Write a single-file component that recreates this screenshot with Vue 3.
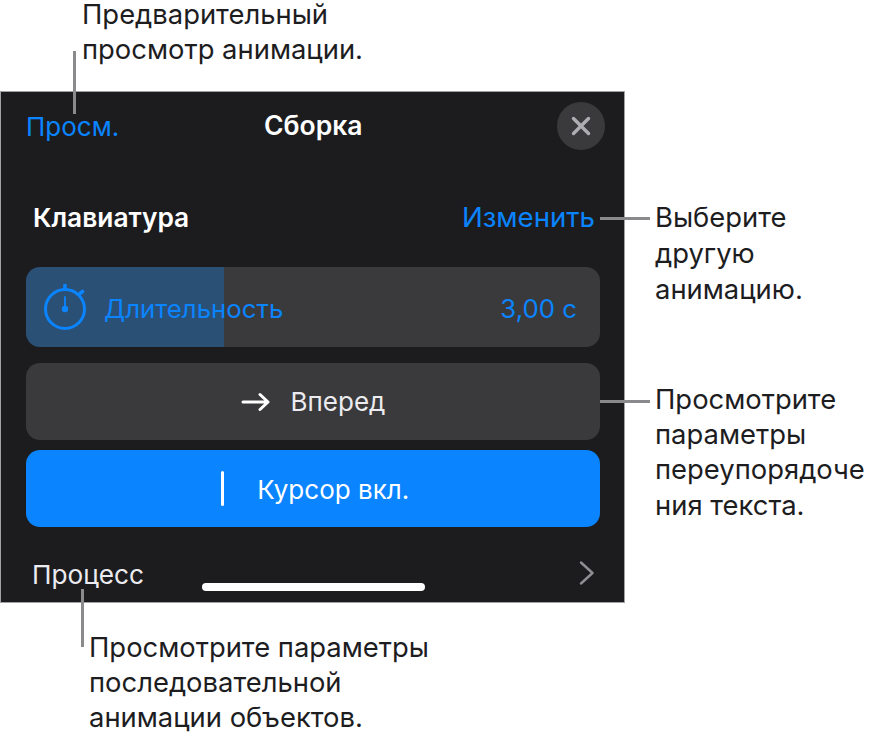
<script setup>
const callouts = [
  { cls: 'c-top', lines: ['Предварительный', 'просмотр анимации.'] },
  { cls: 'c-change', lines: ['Выберите', 'другую', 'анимацию.'] },
  { cls: 'c-order', lines: ['Просмотрите', 'параметры', 'переупорядоче', 'ния текста.'] },
  { cls: 'c-seq', lines: ['Просмотрите параметры', 'последовательной', 'анимации объектов.'] },
]
</script>

<template>
  <div class="page">
    <section class="panel">
      <header class="nav">
        <span class="blue">Просм.</span>
        <span class="title">Сборка</span>
        <span class="close">
          <svg width="22" height="22" viewBox="0 0 22 22"><path d="M3.5 3.5 18.5 18.5M18.5 3.5 3.5 18.5" fill="none" stroke="#aeaeb2" stroke-width="3.4" stroke-linecap="round"/></svg>
        </span>
      </header>
      <div class="effect">
        <span class="effect-name">Клавиатура</span>
        <span class="blue change">Изменить</span>
      </div>
      <div class="rows">
        <div class="row duration">
          <div class="fill"></div>
          <svg class="watch" width="44" height="46" viewBox="0 0 44 46">
            <circle cx="22" cy="25" r="19.5" fill="none" stroke="#0a84ff" stroke-width="3"/>
            <path d="M22 1.5V5.5" stroke="#0a84ff" stroke-width="3.6" stroke-linecap="round"/>
            <path d="M37 9.5 39.5 7.5" stroke="#0a84ff" stroke-width="3.6" stroke-linecap="round"/>
            <path d="M22 25V13" stroke="#0a84ff" stroke-width="1.8" stroke-linecap="round"/>
            <circle cx="22" cy="25" r="3.2" fill="#0a84ff"/>
          </svg>
          <span class="dur-label">Длительность</span>
          <span class="dur-value">3,00 с</span>
        </div>
        <div class="row dir">
          <svg width="30" height="20" viewBox="0 0 30 20"><path d="M2 10H27M19 2.5 27 10 19 17.5" fill="none" stroke="#fff" stroke-width="3" stroke-linecap="round" stroke-linejoin="round"/></svg>
          <span class="label">Вперед</span>
        </div>
        <div class="row cursor">
          <span class="caret"></span>
          <span class="label white">Курсор вкл.</span>
        </div>
      </div>
      <footer class="process">
        <span>Процесс</span>
        <svg width="16" height="24" viewBox="0 0 16 24"><path d="M2 1.5 13.5 12 2 22.5" fill="none" stroke="#8e8e93" stroke-width="2.4" stroke-linecap="round" stroke-linejoin="round"/></svg>
        <span class="home"></span>
      </footer>
    </section>

    <span class="line l-top"></span>
    <span class="line l-change"></span>
    <span class="line l-order"></span>
    <span class="line l-seq"></span>
    <div v-for="c in callouts" :key="c.cls" class="callout" :class="c.cls">
      <div v-for="l in c.lines" :key="l">{{ l }}</div>
    </div>
  </div>
</template>

<style scoped>
.page {
  position: relative;
  width: 878px;
  height: 742px;
  padding-top: 91px;
  box-sizing: border-box;
  background: #fff;
  font-family: Inter, "Liberation Sans", sans-serif;
  overflow: hidden;
}
.panel {
  position: relative;
  width: 625px;
  height: 512px;
  box-sizing: border-box;
  background: #1c1c1e;
  border: 1px solid #a2a2a4;
  color: #fff;
  display: flex;
  flex-direction: column;
  padding: 0 24px 0 25px;
}
.blue { color: #0a84ff; font-size: 26px; }
.change { font-size: 27.6px; }
.nav {
  height: 68px;
  display: flex;
  align-items: center;
  justify-content: space-between;
  position: relative;
}
.title {
  position: absolute;
  left: 238px;
  top: 17px;
  font-size: 26.5px;
  font-weight: 600;
}
.close {
  width: 48px;
  height: 48px;
  border-radius: 50%;
  background: #3a3a3c;
  display: flex;
  align-items: center;
  justify-content: center;
  margin-right: -5px;
}
.effect {
  height: 107px;
  display: flex;
  align-items: center;
  justify-content: space-between;
  padding: 7px 5px 0 7px;
  box-sizing: border-box;
}
.effect-name { font-size: 26.3px; font-weight: 600; }
.rows { display: flex; flex-direction: column; }
.row {
  position: relative;
  border-radius: 14px;
  background: #3a3a3c;
  display: flex;
  align-items: center;
  overflow: hidden;
}
.duration { height: 80px; margin-bottom: 16px; padding: 0 23px 0 17px; }
.fill { position: absolute; left: 0; top: 0; bottom: 0; width: 198px; background: #0a84ff; opacity: .3; }
.watch { position: relative; margin-right: 17px; }
.dur-label, .dur-value { position: relative; top: 1px; color: #0a84ff; font-size: 25.8px; }
.dur-value { margin-left: auto; }
.dir { height: 77px; margin-bottom: 10px; justify-content: center; gap: 20px; }
.cursor { height: 77px; background: #0a84ff; justify-content: center; gap: 33px; padding-left: 4px; }
.cursor .label { position: relative; top: 1px; }
.label { font-size: 26px; color: #ebebf0; }
.white { color: #fff; }
.caret { width: 3.5px; height: 35px; border-radius: 2px; background: #fff; }
.process {
  flex: 1;
  display: flex;
  justify-content: space-between;
  align-items: flex-start;
  padding: 32px 5px 0 6px;
  position: relative;
  font-size: 26.2px;
  color: #ebebf0;
}
.process svg { margin-top: 2px; }
.home {
  position: absolute;
  left: 176px;
  top: 56px;
  width: 223px;
  height: 8px;
  border-radius: 4px;
  background: #fff;
}
.line { position: absolute; background: #8a8a8c; }
.l-top { left: 73px; top: 51px; width: 3px; height: 63px; }
.l-change { left: 600px; top: 217px; width: 50px; height: 3px; }
.l-order { left: 600px; top: 400px; width: 50px; height: 3px; }
.l-seq { left: 81px; top: 589px; width: 3px; height: 58px; }
.callout {
  position: absolute;
  color: #1d1d1f;
  font-size: 27.4px;
  line-height: 36px;
  white-space: nowrap;
}
.c-top { left: 82px; top: -1px; line-height: 30px; }
.c-top div + div { margin-top: 5px; }
.c-change { left: 655px; top: 199px; }
.c-order { left: 655px; top: 382px; line-height: 35.2px; }
.c-seq { left: 89px; top: 630px; line-height: 35px; }
</style>
